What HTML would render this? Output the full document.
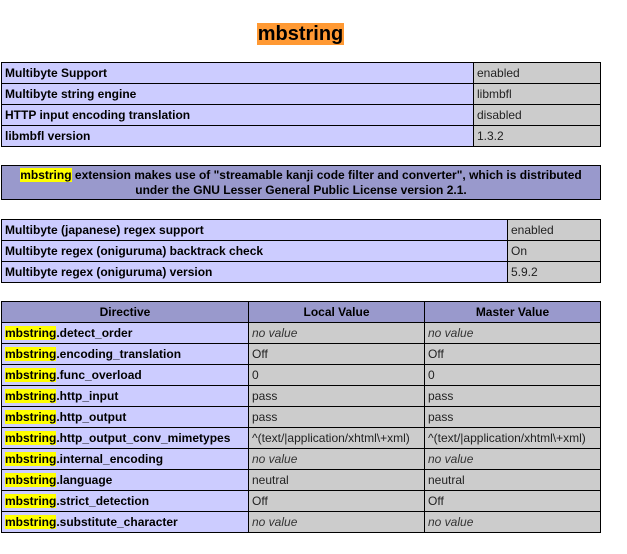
<!DOCTYPE html>
<html><head><style>
body{margin:0;background:#fff;font-family:"Liberation Sans",Arial,sans-serif;font-size:12px;color:#000;}
h2{position:absolute;left:0;width:601px;top:21px;margin:0;text-align:center;font-size:20px;line-height:26px;}
h2 span{background:#f93;padding:0 1px;}
table{position:absolute;left:1px;width:600px;border-collapse:collapse;table-layout:fixed;}
td,th{border:1px solid #000;height:20px;padding:0 3px;font-size:12px;line-height:14px;vertical-align:middle;white-space:nowrap;overflow:hidden;}
.e{background:#ccf;font-weight:bold;}
.v{background:#ccc;color:#222;}
.h{background:#99c;font-weight:bold;text-align:center;}
.y{background:#ff0;}
i{color:#333;}
</style></head><body>
<h2><span>mbstring</span></h2>
<table style="top:62px">
<colgroup><col style="width:472px"><col></colgroup>
<tr><td class="e">Multibyte Support</td><td class="v">enabled</td></tr>
<tr><td class="e">Multibyte string engine</td><td class="v">libmbfl</td></tr>
<tr><td class="e">HTTP input encoding translation</td><td class="v">disabled</td></tr>
<tr><td class="e">libmbfl version</td><td class="v">1.3.2</td></tr>
</table>
<table style="top:165px">
<tr><td class="h" style="height:33px;line-height:15px;white-space:normal"><span class="y">mbstring</span> extension makes use of "streamable kanji code filter and converter", which is distributed under the GNU Lesser General Public License version 2.1.</td></tr>
</table>
<table style="top:219px">
<colgroup><col style="width:506px"><col></colgroup>
<tr><td class="e">Multibyte (japanese) regex support</td><td class="v">enabled</td></tr>
<tr><td class="e">Multibyte regex (oniguruma) backtrack check</td><td class="v">On</td></tr>
<tr><td class="e">Multibyte regex (oniguruma) version</td><td class="v">5.9.2</td></tr>
</table>
<table style="top:301px">
<colgroup><col style="width:247px"><col style="width:176px"><col></colgroup>
<tr><th class="h">Directive</th><th class="h">Local Value</th><th class="h">Master Value</th></tr>
<tr><td class="e"><span class="y">mbstring</span>.detect_order</td><td class="v"><i>no value</i></td><td class="v"><i>no value</i></td></tr>
<tr><td class="e"><span class="y">mbstring</span>.encoding_translation</td><td class="v">Off</td><td class="v">Off</td></tr>
<tr><td class="e"><span class="y">mbstring</span>.func_overload</td><td class="v">0</td><td class="v">0</td></tr>
<tr><td class="e"><span class="y">mbstring</span>.http_input</td><td class="v">pass</td><td class="v">pass</td></tr>
<tr><td class="e"><span class="y">mbstring</span>.http_output</td><td class="v">pass</td><td class="v">pass</td></tr>
<tr><td class="e"><span class="y">mbstring</span>.http_output_conv_mimetypes</td><td class="v">^(text/|application/xhtml\+xml)</td><td class="v">^(text/|application/xhtml\+xml)</td></tr>
<tr><td class="e"><span class="y">mbstring</span>.internal_encoding</td><td class="v"><i>no value</i></td><td class="v"><i>no value</i></td></tr>
<tr><td class="e"><span class="y">mbstring</span>.language</td><td class="v">neutral</td><td class="v">neutral</td></tr>
<tr><td class="e"><span class="y">mbstring</span>.strict_detection</td><td class="v">Off</td><td class="v">Off</td></tr>
<tr><td class="e"><span class="y">mbstring</span>.substitute_character</td><td class="v"><i>no value</i></td><td class="v"><i>no value</i></td></tr>
</table>
</body></html>
